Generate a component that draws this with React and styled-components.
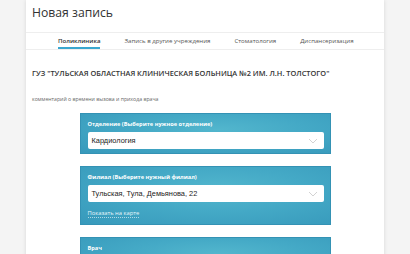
import React from "react";
import styled, { createGlobalStyle } from "styled-components";

const GlobalStyle = createGlobalStyle`
  html, body {
    margin: 0;
    padding: 0;
    background: #f4f4f4;
    font-family: "Open Sans", "DejaVu Sans", sans-serif;
    overflow: hidden;
  }
`;

const Page = styled.div`
  min-height: 100vh;
  display: flex;
  padding-left: 26px;
`;

const Card = styled.div`
  width: 358px;
  min-height: 300px;
  background: #fff;
  box-shadow: 0 0 4px rgba(0, 0, 0, 0.12);
`;

const Title = styled.h1`
  margin: 0;
  height: 32px;
  padding: 5px 6px 0;
  box-sizing: border-box;
  font-size: 12.2px;
  font-weight: 400;
  color: #333;
  line-height: 16px;
`;

const Tabs = styled.div`
  display: flex;
  gap: 24px;
  height: 16px;
  padding-left: 32px;
  border-top: 1px solid #eee;
  border-bottom: 1px solid #eee;
`;

const Tab = styled.div`
  position: relative;
  font-size: 6.1px;
  line-height: 16px;
  color: ${({ active }) => (active ? "#333" : "#555")};
  font-weight: ${({ active }) => (active ? 600 : 400)};
  &::after {
    content: "";
    display: ${({ active }) => (active ? "block" : "none")};
    position: absolute;
    left: 0;
    right: 0;
    bottom: 0;
    height: 2px;
    background: #3aa7cf;
  }
`;

const Body = styled.div`
  padding: 0 6px;
`;

const Org = styled.div`
  margin-top: 18px;
  font-size: 7.4px;
  font-weight: 600;
  color: #333;
  line-height: 10px;
`;

const Comment = styled.div`
  margin-top: 17px;
  font-size: 5.2px;
  color: #666;
  line-height: 8px;
`;

const Panels = styled.div`
  display: flex;
  flex-direction: column;
  align-items: center;
  gap: 12px;
  margin-top: 10px;
`;

const Panel = styled.div`
  width: 251px;
  box-sizing: border-box;
  padding: 5px 6px 4px 7px;
  border: 1px solid #3492b4;
  background: radial-gradient(
      ellipse at 55% 40%,
      #52b6cd 0%,
      #44a9c6 45%,
      #3799bb 100%
    );
`;

const Label = styled.div`
  font-size: 5.65px;
  font-weight: 700;
  color: #fff;
  line-height: 10px;
  margin-bottom: 3px;
`;

const Select = styled.div`
  display: flex;
  align-items: center;
  justify-content: space-between;
  height: 17px;
  padding: 0 6px 0 4px;
  background: #fff;
  border-radius: 2px;
  font-family: "Liberation Sans", Arial, sans-serif;
  font-size: 7.4px;
  color: #222;
`;

const MapLink = styled.a`
  display: block;
  width: fit-content;
  margin: 7px 0 2px;
  font-size: 5.8px;
  color: #e6f5fa;
  line-height: 8px;
  text-decoration: none;
  border-bottom: 1px dotted rgba(255, 255, 255, 0.6);
`;

const Chevron = () => (
  <svg width="10" height="6" viewBox="0 0 10 6">
    <path d="M1 1 L5 5 L9 1" fill="none" stroke="#c8c8c8" strokeWidth="0.8" />
  </svg>
);

const tabs = [
  "Поликлиника",
  "Запись в другие учреждения",
  "Стоматология",
  "Диспансеризация",
];

export default function App() {
  return (
    <>
      <GlobalStyle />
      <Page>
        <Card>
          <Title>Новая запись</Title>
          <Tabs>
            {tabs.map((t, i) => (
              <Tab key={t} active={i === 0}>
                {t}
              </Tab>
            ))}
          </Tabs>
          <Body>
            <Org>
              ГУЗ "ТУЛЬСКАЯ ОБЛАСТНАЯ КЛИНИЧЕСКАЯ БОЛЬНИЦА №2 ИМ. Л.Н. ТОЛСТОГО"
            </Org>
            <Comment>комментарий о времени вызова и прихода врача</Comment>
            <Panels>
              <Panel>
                <Label>Отделение (Выберите нужное отделение)</Label>
                <Select>
                  Кардиология
                  <Chevron />
                </Select>
              </Panel>
              <Panel>
                <Label>Филиал (Выберите нужный филиал)</Label>
                <Select>
                  Тульская, Тула, Демьянова, 22
                  <Chevron />
                </Select>
                <MapLink>Показать на карте</MapLink>
              </Panel>
              <Panel>
                <Label>Врач</Label>
                <Select />
              </Panel>
            </Panels>
          </Body>
        </Card>
      </Page>
    </>
  );
}
